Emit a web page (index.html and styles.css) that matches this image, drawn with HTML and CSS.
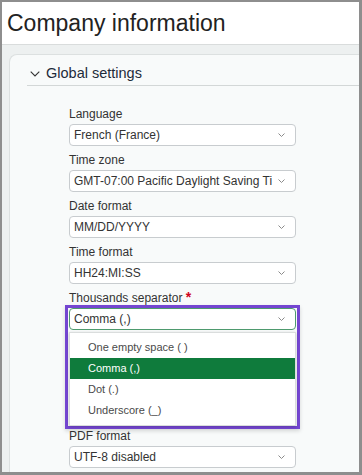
FILE: index.html
```html
<!DOCTYPE html>
<html lang="en">
<head>
  <meta charset="UTF-8" />
  <meta name="viewport" content="width=device-width, initial-scale=1.0"/>
  <title>Company information</title>
  <link rel="stylesheet" href="styles.css">
</head>
<body>
  <div class="frame">
    <div class="page-header">
      <h1 class="page-title">Company information</h1>
    </div>

    <div class="page-body">
      <div class="settings-card">
        <div class="section-head">
          <svg class="section-chevron" width="10" height="6" viewBox="0 0 10 6">
            <path d="M0.7 0.7 L5 5 L9.3 0.7" fill="none" stroke="#333" stroke-width="1.1"/>
          </svg>
          <span>Global settings</span>
        </div>

        <div class="fields">
          <div class="field">
            <div class="field-label">Language</div>
            <div class="select-box">
              <span class="select-value">French (France)</span>
              <svg class="select-arrow" width="7" height="4" viewBox="0 0 7 4"><path d="M0.5 0.5 L3.5 3.5 L6.5 0.5" fill="none" stroke="#8a8a8a" stroke-width="1"/></svg>
            </div>
          </div>

          <div class="field">
            <div class="field-label">Time zone</div>
            <div class="select-box">
              <span class="select-value">GMT-07:00 Pacific Daylight Saving Ti</span>
              <svg class="select-arrow" width="7" height="4" viewBox="0 0 7 4"><path d="M0.5 0.5 L3.5 3.5 L6.5 0.5" fill="none" stroke="#8a8a8a" stroke-width="1"/></svg>
            </div>
          </div>

          <div class="field">
            <div class="field-label">Date format</div>
            <div class="select-box">
              <span class="select-value">MM/DD/YYYY</span>
              <svg class="select-arrow" width="7" height="4" viewBox="0 0 7 4"><path d="M0.5 0.5 L3.5 3.5 L6.5 0.5" fill="none" stroke="#8a8a8a" stroke-width="1"/></svg>
            </div>
          </div>

          <div class="field">
            <div class="field-label">Time format</div>
            <div class="select-box">
              <span class="select-value">HH24:MI:SS</span>
              <svg class="select-arrow" width="7" height="4" viewBox="0 0 7 4"><path d="M0.5 0.5 L3.5 3.5 L6.5 0.5" fill="none" stroke="#8a8a8a" stroke-width="1"/></svg>
            </div>
          </div>

          <div class="field field-open">
            <div class="field-label">Thousands separator <span class="required">*</span></div>
            <div class="highlight">
              <div class="select-box select-active">
                <span class="select-value">Comma (,)</span>
                <svg class="select-arrow" width="7" height="4" viewBox="0 0 7 4"><path d="M0.5 0.5 L3.5 3.5 L6.5 0.5" fill="none" stroke="#8a8a8a" stroke-width="1"/></svg>
              </div>
              <ul class="option-list">
                <li class="option">One empty space ( )</li>
                <li class="option option-selected">Comma (,)</li>
                <li class="option">Dot (.)</li>
                <li class="option">Underscore (_)</li>
              </ul>
            </div>
          </div>

          <div class="field">
            <div class="field-label">PDF format</div>
            <div class="select-box">
              <span class="select-value">UTF-8 disabled</span>
              <svg class="select-arrow" width="7" height="4" viewBox="0 0 7 4"><path d="M0.5 0.5 L3.5 3.5 L6.5 0.5" fill="none" stroke="#8a8a8a" stroke-width="1"/></svg>
            </div>
          </div>
        </div>
      </div>
    </div>
  </div>
</body>
</html>
```

FILE: styles.css
```css
body {
  margin: 0;
  padding: 0;
  font-family: 'Liberation Sans', Arial, sans-serif;
  background-color: #ffffff;
}

.frame {
  width: 362px;
  height: 475px;
  box-sizing: border-box;
  border-style: solid;
  border-color: #8e8e8e;
  border-width: 2px 3px 3px 2px;
  overflow: hidden;
  display: flex;
  flex-direction: column;
}

.page-header {
  height: 43px;
  box-sizing: border-box;
  background-color: #ffffff;
  border-bottom: 1px solid #d9dcdc;
  padding: 1px 0 0 5px;
}

.page-title {
  margin: 0;
  font-size: 23px;
  font-weight: normal;
  line-height: 41px;
  color: #222222;
}

.page-body {
  flex: 1;
  background-color: #edf0f0;
  padding: 9px 0 0 7px;
  display: flex;
  flex-direction: column;
}

.settings-card {
  flex: 1;
  margin-right: -12px;
  background-color: #f8fafa;
  border: 1px solid #dce0e0;
  border-right: none;
  border-bottom: none;
  border-radius: 8px 0 0 0;
  padding-left: 17px;
}

.section-head {
  display: flex;
  align-items: center;
  gap: 6px;
  padding: 8px 0 2px 3px;
  line-height: 20px;
  font-size: 14.5px;
  color: #1d2b3a;
  border-bottom: 1px solid #d3d7d7;
}

.section-chevron {
  margin-top: 2px;
}

.fields {
  margin-left: 42px;
  width: 227px;
  padding-top: 21px;
}

.field {
  margin-bottom: 7px;
}

.field-open {
  margin-bottom: 0;
}

.field-label {
  font-size: 12px;
  line-height: 15px;
  color: #333333;
  margin-bottom: 2px;
}

.required {
  color: #d0021b;
  font-size: 14px;
  font-weight: bold;
  line-height: 10px;
}

.select-box {
  height: 22px;
  box-sizing: border-box;
  background-color: #ffffff;
  border: 1px solid #c8cccf;
  border-radius: 4px;
  padding: 0 10px 0 4px;
  display: flex;
  align-items: center;
  gap: 6px;
  overflow: hidden;
}

.select-value {
  flex: 1;
  font-size: 12px;
  line-height: 20px;
  color: #333333;
  white-space: nowrap;
  overflow: hidden;
}

.select-arrow {
  flex-shrink: 0;
}

.select-active {
  border-color: #4e9a6e;
}

.highlight {
  margin: -3px -4px 0 -4px;
  border: 3px solid #7446d1;
  padding: 0 1px;
  box-shadow: 0 2px 4px rgba(0, 0, 0, 0.15);
}

.option-list {
  list-style: none;
  margin: 2px 0 0 0;
  padding: 4px 0;
  background-color: #ffffff;
  border: 1px solid #dadddd;
  box-shadow: 0 1px 3px rgba(0, 0, 0, 0.2);
}

.option {
  height: 21px;
  line-height: 21px;
  padding-left: 18px;
  font-size: 11px;
  color: #4a4a4a;
}

.option-selected {
  background-color: #0f7b3c;
  color: #ffffff;
}
```
